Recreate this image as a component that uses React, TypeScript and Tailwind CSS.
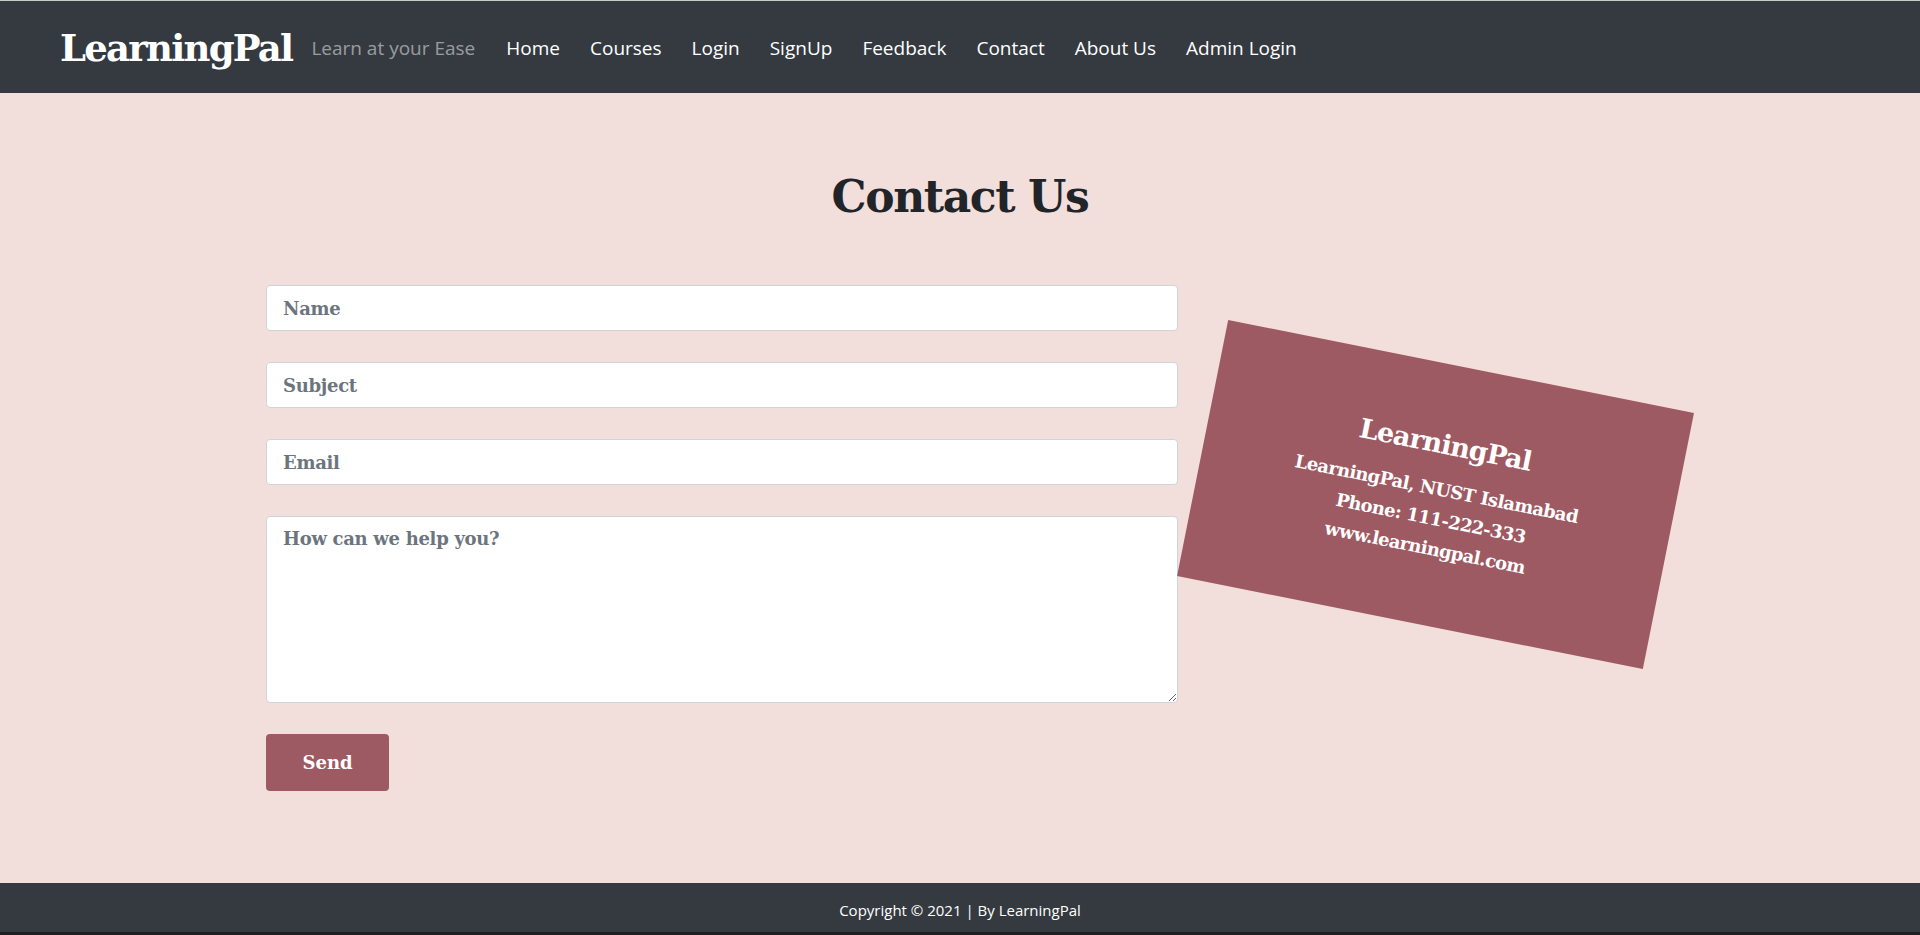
import React from "react";

const links = ["Home", "Courses", "Login", "SignUp", "Feedback", "Contact", "About Us", "Admin Login"];

export default function App() {
    return (
        <div className="min-h-screen flex flex-col bg-[#f2dfdc] font-['Open_Sans',sans-serif]">
            <nav className="h-[93px] bg-[#343a40] border-t border-[#c9c9c9] flex items-center pl-[60px] pt-[2px]">
                <a className="font-['DejaVu_Serif',serif] font-bold text-[37px] tracking-[-1.75px] text-white leading-none">
                    LearningPal
                </a>
                <span className="ml-[19px] text-[19px] text-white/50">Learn at your Ease</span>
                <ul className="flex ml-[31px] gap-[30px] text-[19px] text-white">
                    {links.map((l) => (
                        <li key={l}>{l}</li>
                    ))}
                </ul>
            </nav>

            <main className="flex-1 font-['DejaVu_Serif',serif]">
                <h1 className="text-center text-[44px] tracking-[-1.4px] leading-[1.2] font-bold text-[#212529] mt-[78px]">
                    Contact Us
                </h1>
                <div className="flex pl-[266px] gap-[20px] mt-[61px] items-start">
                    <form className="w-[912px] flex flex-col gap-[31px]" onSubmit={(e) => e.preventDefault()}>
                        <input
                            className="h-[46px] bg-white border border-[#ced4da] rounded px-4 pt-[2px] text-[18px] tracking-[-0.3px] font-bold placeholder:text-[#6c757d]"
                            placeholder="Name"
                        />
                        <input
                            className="h-[46px] bg-white border border-[#ced4da] rounded px-4 pt-[2px] text-[18px] tracking-[-0.3px] font-bold placeholder:text-[#6c757d]"
                            placeholder="Subject"
                        />
                        <input
                            className="h-[46px] bg-white border border-[#ced4da] rounded px-4 pt-[2px] text-[18px] tracking-[-0.3px] font-bold placeholder:text-[#6c757d]"
                            placeholder="Email"
                        />
                        <textarea
                            className="h-[187px] bg-white border border-[#ced4da] rounded px-4 py-2 text-[18px] tracking-[-0.3px] font-bold placeholder:text-[#6c757d]"
                            placeholder="How can we help you?"
                        />
                        <button className="w-[123px] h-[57px] rounded bg-[#9e5a63] text-white text-[18px] font-bold">Send</button>
                    </form>

                    {/* tilted address card */}
                    <div className="mt-[79px] w-[475px] h-[261px] bg-[#9e5a63] rotate-[11.3deg] flex flex-col items-center justify-center text-white text-center">
                        <h3 className="text-[27px] tracking-[-0.8px] leading-[36px] font-bold mb-[12px]">LearningPal</h3>
                        <p className="text-[18px] tracking-[-0.6px] leading-[30px] font-semibold">LearningPal, NUST Islamabad</p>
                        <p className="text-[18px] tracking-[-0.6px] leading-[30px] font-semibold">Phone: 111-222-333</p>
                        <p className="text-[18px] tracking-[-0.6px] leading-[30px] font-semibold">www.learningpal.com</p>
                    </div>
                </div>
            </main>

            <footer className="h-[52px] bg-[#343a40] border-b-[3px] border-[#1f1f1f] flex items-center justify-center pt-[6px] text-white text-[15px]">
                Copyright © 2021 | By LearningPal
            </footer>
        </div>
    );
}
